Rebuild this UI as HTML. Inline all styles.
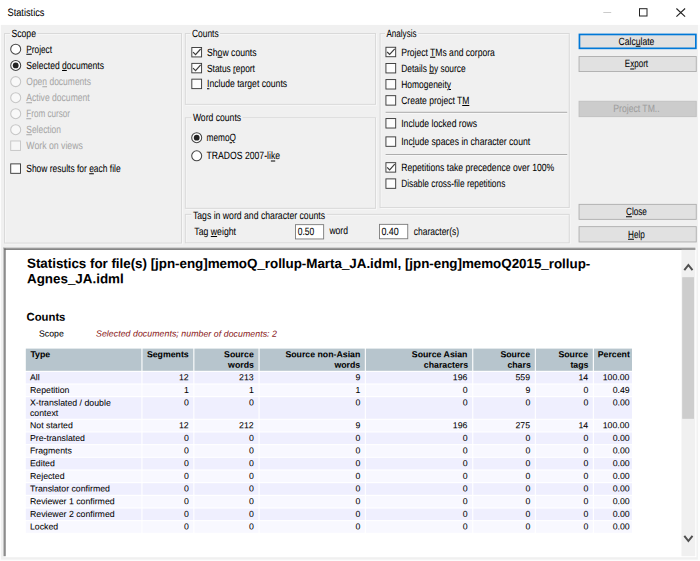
<!DOCTYPE html>
<html lang="en"><head><meta charset="utf-8"><title>Statistics</title>
<style>
html,body{margin:0;padding:0}
body{width:700px;height:561px;position:relative;overflow:hidden;background:#f0f0f0;font-family:"Liberation Sans",sans-serif}
#g{position:absolute;left:0;top:0;display:block}
.t{position:absolute;white-space:nowrap;line-height:14px;height:14px;transform-origin:0 50%;-webkit-text-stroke:0.05px currentColor}
.t u{text-decoration:underline;text-decoration-thickness:0.75px;text-underline-offset:0.75px}
.r{position:absolute;white-space:nowrap;-webkit-text-stroke:0.05px currentColor}
</style></head>
<body>
<svg id="g" width="700" height="561" viewBox="0 0 700 561">
<rect x="0.00" y="0.00" width="700.00" height="561.00" fill="#fcfcfc"/>
<rect x="1.00" y="0.00" width="696.90" height="559.60" fill="#f0f0f0"/>
<rect x="0.00" y="0.00" width="700.00" height="24.90" fill="#fff"/>
<rect x="603.30" y="12.10" width="7.90" height="0.90" fill="#c6c6c6"/>
<rect x="639.50" y="8.70" width="7.50" height="7.30" fill="none" stroke="#222" stroke-width="1.00"/>
<path d="M676.4 8.5 L685.1 16.6 M685.1 8.5 L676.4 16.6" stroke="#222" stroke-width="1.1" fill="none"/>
<rect x="5.35" y="34.25" width="177.10" height="209.70" fill="none" stroke="#f9f9f9" stroke-width="0.80"/>
<rect x="4.57" y="33.48" width="176.95" height="209.55" fill="none" stroke="#d8d8d8" stroke-width="0.95"/>
<rect x="9.90" y="32.00" width="27.60" height="3.50" fill="#f0f0f0"/>
<circle cx="15.70" cy="49.20" r="5.00" fill="#fff" stroke="#444" stroke-width="1.05"/>
<circle cx="15.70" cy="65.40" r="5.00" fill="#fff" stroke="#444" stroke-width="1.05"/>
<circle cx="15.70" cy="65.40" r="2.9" fill="#222"/>
<circle cx="15.70" cy="81.60" r="5.00" fill="#f8f8f8" stroke="#c6c6c6" stroke-width="1.05"/>
<circle cx="15.70" cy="97.70" r="5.00" fill="#f8f8f8" stroke="#c6c6c6" stroke-width="1.05"/>
<circle cx="15.70" cy="113.70" r="5.00" fill="#f8f8f8" stroke="#c6c6c6" stroke-width="1.05"/>
<circle cx="15.70" cy="129.70" r="5.00" fill="#f8f8f8" stroke="#c6c6c6" stroke-width="1.05"/>
<rect x="10.72" y="140.97" width="9.75" height="9.45" fill="#f6f6f6" stroke="#c6c6c6" stroke-width="0.95"/>
<rect x="10.72" y="163.88" width="9.75" height="9.45" fill="#fdfdfd" stroke="#3c3c3c" stroke-width="0.95"/>
<rect x="186.05" y="34.25" width="190.40" height="71.00" fill="none" stroke="#f9f9f9" stroke-width="0.80"/>
<rect x="185.28" y="33.48" width="190.25" height="70.85" fill="none" stroke="#d8d8d8" stroke-width="0.95"/>
<rect x="190.50" y="32.00" width="29.60" height="3.50" fill="#f0f0f0"/>
<rect x="191.82" y="47.48" width="9.75" height="9.45" fill="#fdfdfd" stroke="#3c3c3c" stroke-width="0.95"/>
<path d="M193.05 52.20 L195.55 54.70 L200.65 49.00" fill="none" stroke="#3a3a3a" stroke-width="1.15"/>
<rect x="191.82" y="63.38" width="9.75" height="9.45" fill="#fdfdfd" stroke="#3c3c3c" stroke-width="0.95"/>
<path d="M193.05 68.10 L195.55 70.60 L200.65 64.90" fill="none" stroke="#3a3a3a" stroke-width="1.15"/>
<rect x="191.82" y="79.17" width="9.75" height="9.45" fill="#fdfdfd" stroke="#3c3c3c" stroke-width="0.95"/>
<rect x="186.05" y="118.55" width="190.40" height="90.70" fill="none" stroke="#f9f9f9" stroke-width="0.80"/>
<rect x="185.28" y="117.77" width="190.25" height="90.55" fill="none" stroke="#d8d8d8" stroke-width="0.95"/>
<rect x="191.40" y="116.30" width="51.20" height="3.50" fill="#f0f0f0"/>
<circle cx="196.70" cy="137.70" r="5.00" fill="#fff" stroke="#444" stroke-width="1.05"/>
<circle cx="196.70" cy="137.70" r="2.9" fill="#222"/>
<circle cx="196.70" cy="155.80" r="5.00" fill="#fff" stroke="#444" stroke-width="1.05"/>
<rect x="380.85" y="34.25" width="189.30" height="174.20" fill="none" stroke="#f9f9f9" stroke-width="0.80"/>
<rect x="380.08" y="33.48" width="189.15" height="174.05" fill="none" stroke="#d8d8d8" stroke-width="0.95"/>
<rect x="385.00" y="32.00" width="33.00" height="3.50" fill="#f0f0f0"/>
<rect x="385.93" y="47.27" width="9.75" height="9.45" fill="#fdfdfd" stroke="#3c3c3c" stroke-width="0.95"/>
<path d="M387.15 52.00 L389.65 54.50 L394.75 48.80" fill="none" stroke="#3a3a3a" stroke-width="1.15"/>
<rect x="385.93" y="63.48" width="9.75" height="9.45" fill="#fdfdfd" stroke="#3c3c3c" stroke-width="0.95"/>
<rect x="385.93" y="79.57" width="9.75" height="9.45" fill="#fdfdfd" stroke="#3c3c3c" stroke-width="0.95"/>
<rect x="385.93" y="95.67" width="9.75" height="9.45" fill="#fdfdfd" stroke="#3c3c3c" stroke-width="0.95"/>
<rect x="385.93" y="118.57" width="9.75" height="9.45" fill="#fdfdfd" stroke="#3c3c3c" stroke-width="0.95"/>
<rect x="385.93" y="136.88" width="9.75" height="9.45" fill="#fdfdfd" stroke="#3c3c3c" stroke-width="0.95"/>
<rect x="385.93" y="162.68" width="9.75" height="9.45" fill="#fdfdfd" stroke="#3c3c3c" stroke-width="0.95"/>
<path d="M387.15 167.40 L389.65 169.90 L394.75 164.20" fill="none" stroke="#3a3a3a" stroke-width="1.15"/>
<rect x="385.93" y="178.88" width="9.75" height="9.45" fill="#fdfdfd" stroke="#3c3c3c" stroke-width="0.95"/>
<rect x="385.60" y="112.70" width="181.60" height="0.90" fill="#fcfcfc"/>
<rect x="385.60" y="111.80" width="181.60" height="0.95" fill="#a6a6a6"/>
<rect x="385.60" y="155.00" width="181.60" height="0.90" fill="#fcfcfc"/>
<rect x="385.60" y="154.10" width="181.60" height="0.95" fill="#a6a6a6"/>
<rect x="186.05" y="215.15" width="384.10" height="28.60" fill="none" stroke="#f9f9f9" stroke-width="0.80"/>
<rect x="185.28" y="214.38" width="383.95" height="28.45" fill="none" stroke="#d8d8d8" stroke-width="0.95"/>
<rect x="191.40" y="212.90" width="135.20" height="3.50" fill="#f0f0f0"/>
<rect x="295.45" y="224.65" width="28.20" height="14.30" fill="#fff" stroke="#7a7a7a" stroke-width="0.90"/>
<rect x="379.55" y="224.35" width="28.20" height="14.40" fill="#fff" stroke="#7a7a7a" stroke-width="0.90"/>
<rect x="579.45" y="34.45" width="116.40" height="13.90" fill="#e1e1e1" stroke="#0078d7" stroke-width="1.70"/>
<rect x="579.05" y="56.55" width="117.20" height="15.00" fill="#e1e1e1" stroke="#adadad" stroke-width="0.90"/>
<rect x="579.05" y="101.25" width="117.20" height="15.40" fill="#cccccc" stroke="#bfbfbf" stroke-width="0.90"/>
<rect x="579.05" y="204.35" width="117.20" height="15.00" fill="#e1e1e1" stroke="#adadad" stroke-width="0.90"/>
<rect x="579.05" y="226.65" width="117.20" height="15.30" fill="#e1e1e1" stroke="#adadad" stroke-width="0.90"/>
<rect x="3.40" y="247.60" width="693.00" height="309.60" fill="#fff"/>
<rect x="3.40" y="247.60" width="692.00" height="0.90" fill="#a0a0a0"/>
<rect x="3.40" y="247.60" width="0.90" height="308.60" fill="#a0a0a0"/>
<rect x="4.30" y="248.50" width="691.10" height="1.30" fill="#696969"/>
<rect x="4.30" y="248.50" width="1.30" height="307.70" fill="#696969"/>
<rect x="681.50" y="249.80" width="13.80" height="306.40" fill="#f0f0f0"/>
<path d="M684.3 270.2 L688.4 265.0 L692.5 270.2" fill="none" stroke="#505050" stroke-width="2"/>
<rect x="682.20" y="277.20" width="11.80" height="141.60" fill="#cdcdcd"/>
<path d="M684.3 535.8 L688.4 541.0 L692.5 535.8" fill="none" stroke="#505050" stroke-width="2"/>
<rect x="25.80" y="348.60" width="115.60" height="22.20" fill="#b7c5cd"/>
<rect x="142.50" y="348.60" width="50.80" height="22.20" fill="#b7c5cd"/>
<rect x="194.40" y="348.60" width="64.10" height="22.20" fill="#b7c5cd"/>
<rect x="259.60" y="348.60" width="105.20" height="22.20" fill="#b7c5cd"/>
<rect x="365.90" y="348.60" width="106.30" height="22.20" fill="#b7c5cd"/>
<rect x="473.30" y="348.60" width="61.50" height="22.20" fill="#b7c5cd"/>
<rect x="535.90" y="348.60" width="56.90" height="22.20" fill="#b7c5cd"/>
<rect x="593.90" y="348.60" width="38.10" height="22.20" fill="#b7c5cd"/>
<rect x="25.80" y="371.90" width="115.60" height="11.55" fill="#efeffe"/>
<rect x="142.50" y="371.90" width="50.80" height="11.55" fill="#efeffe"/>
<rect x="194.40" y="371.90" width="64.10" height="11.55" fill="#efeffe"/>
<rect x="259.60" y="371.90" width="105.20" height="11.55" fill="#efeffe"/>
<rect x="365.90" y="371.90" width="106.30" height="11.55" fill="#efeffe"/>
<rect x="473.30" y="371.90" width="61.50" height="11.55" fill="#efeffe"/>
<rect x="535.90" y="371.90" width="56.90" height="11.55" fill="#efeffe"/>
<rect x="593.90" y="371.90" width="38.10" height="11.55" fill="#efeffe"/>
<rect x="25.80" y="384.57" width="115.60" height="11.55" fill="#f8f8ff"/>
<rect x="142.50" y="384.57" width="50.80" height="11.55" fill="#f8f8ff"/>
<rect x="194.40" y="384.57" width="64.10" height="11.55" fill="#f8f8ff"/>
<rect x="259.60" y="384.57" width="105.20" height="11.55" fill="#f8f8ff"/>
<rect x="365.90" y="384.57" width="106.30" height="11.55" fill="#f8f8ff"/>
<rect x="473.30" y="384.57" width="61.50" height="11.55" fill="#f8f8ff"/>
<rect x="535.90" y="384.57" width="56.90" height="11.55" fill="#f8f8ff"/>
<rect x="593.90" y="384.57" width="38.10" height="11.55" fill="#f8f8ff"/>
<rect x="25.80" y="397.24" width="115.60" height="21.50" fill="#efeffe"/>
<rect x="142.50" y="397.24" width="50.80" height="21.50" fill="#efeffe"/>
<rect x="194.40" y="397.24" width="64.10" height="21.50" fill="#efeffe"/>
<rect x="259.60" y="397.24" width="105.20" height="21.50" fill="#efeffe"/>
<rect x="365.90" y="397.24" width="106.30" height="21.50" fill="#efeffe"/>
<rect x="473.30" y="397.24" width="61.50" height="21.50" fill="#efeffe"/>
<rect x="535.90" y="397.24" width="56.90" height="21.50" fill="#efeffe"/>
<rect x="593.90" y="397.24" width="38.10" height="21.50" fill="#efeffe"/>
<rect x="25.80" y="419.86" width="115.60" height="11.55" fill="#f8f8ff"/>
<rect x="142.50" y="419.86" width="50.80" height="11.55" fill="#f8f8ff"/>
<rect x="194.40" y="419.86" width="64.10" height="11.55" fill="#f8f8ff"/>
<rect x="259.60" y="419.86" width="105.20" height="11.55" fill="#f8f8ff"/>
<rect x="365.90" y="419.86" width="106.30" height="11.55" fill="#f8f8ff"/>
<rect x="473.30" y="419.86" width="61.50" height="11.55" fill="#f8f8ff"/>
<rect x="535.90" y="419.86" width="56.90" height="11.55" fill="#f8f8ff"/>
<rect x="593.90" y="419.86" width="38.10" height="11.55" fill="#f8f8ff"/>
<rect x="25.80" y="432.53" width="115.60" height="11.55" fill="#efeffe"/>
<rect x="142.50" y="432.53" width="50.80" height="11.55" fill="#efeffe"/>
<rect x="194.40" y="432.53" width="64.10" height="11.55" fill="#efeffe"/>
<rect x="259.60" y="432.53" width="105.20" height="11.55" fill="#efeffe"/>
<rect x="365.90" y="432.53" width="106.30" height="11.55" fill="#efeffe"/>
<rect x="473.30" y="432.53" width="61.50" height="11.55" fill="#efeffe"/>
<rect x="535.90" y="432.53" width="56.90" height="11.55" fill="#efeffe"/>
<rect x="593.90" y="432.53" width="38.10" height="11.55" fill="#efeffe"/>
<rect x="25.80" y="445.20" width="115.60" height="11.55" fill="#f8f8ff"/>
<rect x="142.50" y="445.20" width="50.80" height="11.55" fill="#f8f8ff"/>
<rect x="194.40" y="445.20" width="64.10" height="11.55" fill="#f8f8ff"/>
<rect x="259.60" y="445.20" width="105.20" height="11.55" fill="#f8f8ff"/>
<rect x="365.90" y="445.20" width="106.30" height="11.55" fill="#f8f8ff"/>
<rect x="473.30" y="445.20" width="61.50" height="11.55" fill="#f8f8ff"/>
<rect x="535.90" y="445.20" width="56.90" height="11.55" fill="#f8f8ff"/>
<rect x="593.90" y="445.20" width="38.10" height="11.55" fill="#f8f8ff"/>
<rect x="25.80" y="457.87" width="115.60" height="11.55" fill="#efeffe"/>
<rect x="142.50" y="457.87" width="50.80" height="11.55" fill="#efeffe"/>
<rect x="194.40" y="457.87" width="64.10" height="11.55" fill="#efeffe"/>
<rect x="259.60" y="457.87" width="105.20" height="11.55" fill="#efeffe"/>
<rect x="365.90" y="457.87" width="106.30" height="11.55" fill="#efeffe"/>
<rect x="473.30" y="457.87" width="61.50" height="11.55" fill="#efeffe"/>
<rect x="535.90" y="457.87" width="56.90" height="11.55" fill="#efeffe"/>
<rect x="593.90" y="457.87" width="38.10" height="11.55" fill="#efeffe"/>
<rect x="25.80" y="470.54" width="115.60" height="11.55" fill="#f8f8ff"/>
<rect x="142.50" y="470.54" width="50.80" height="11.55" fill="#f8f8ff"/>
<rect x="194.40" y="470.54" width="64.10" height="11.55" fill="#f8f8ff"/>
<rect x="259.60" y="470.54" width="105.20" height="11.55" fill="#f8f8ff"/>
<rect x="365.90" y="470.54" width="106.30" height="11.55" fill="#f8f8ff"/>
<rect x="473.30" y="470.54" width="61.50" height="11.55" fill="#f8f8ff"/>
<rect x="535.90" y="470.54" width="56.90" height="11.55" fill="#f8f8ff"/>
<rect x="593.90" y="470.54" width="38.10" height="11.55" fill="#f8f8ff"/>
<rect x="25.80" y="483.21" width="115.60" height="11.55" fill="#efeffe"/>
<rect x="142.50" y="483.21" width="50.80" height="11.55" fill="#efeffe"/>
<rect x="194.40" y="483.21" width="64.10" height="11.55" fill="#efeffe"/>
<rect x="259.60" y="483.21" width="105.20" height="11.55" fill="#efeffe"/>
<rect x="365.90" y="483.21" width="106.30" height="11.55" fill="#efeffe"/>
<rect x="473.30" y="483.21" width="61.50" height="11.55" fill="#efeffe"/>
<rect x="535.90" y="483.21" width="56.90" height="11.55" fill="#efeffe"/>
<rect x="593.90" y="483.21" width="38.10" height="11.55" fill="#efeffe"/>
<rect x="25.80" y="495.88" width="115.60" height="11.55" fill="#f8f8ff"/>
<rect x="142.50" y="495.88" width="50.80" height="11.55" fill="#f8f8ff"/>
<rect x="194.40" y="495.88" width="64.10" height="11.55" fill="#f8f8ff"/>
<rect x="259.60" y="495.88" width="105.20" height="11.55" fill="#f8f8ff"/>
<rect x="365.90" y="495.88" width="106.30" height="11.55" fill="#f8f8ff"/>
<rect x="473.30" y="495.88" width="61.50" height="11.55" fill="#f8f8ff"/>
<rect x="535.90" y="495.88" width="56.90" height="11.55" fill="#f8f8ff"/>
<rect x="593.90" y="495.88" width="38.10" height="11.55" fill="#f8f8ff"/>
<rect x="25.80" y="508.55" width="115.60" height="11.55" fill="#efeffe"/>
<rect x="142.50" y="508.55" width="50.80" height="11.55" fill="#efeffe"/>
<rect x="194.40" y="508.55" width="64.10" height="11.55" fill="#efeffe"/>
<rect x="259.60" y="508.55" width="105.20" height="11.55" fill="#efeffe"/>
<rect x="365.90" y="508.55" width="106.30" height="11.55" fill="#efeffe"/>
<rect x="473.30" y="508.55" width="61.50" height="11.55" fill="#efeffe"/>
<rect x="535.90" y="508.55" width="56.90" height="11.55" fill="#efeffe"/>
<rect x="593.90" y="508.55" width="38.10" height="11.55" fill="#efeffe"/>
<rect x="25.80" y="521.22" width="115.60" height="11.55" fill="#f8f8ff"/>
<rect x="142.50" y="521.22" width="50.80" height="11.55" fill="#f8f8ff"/>
<rect x="194.40" y="521.22" width="64.10" height="11.55" fill="#f8f8ff"/>
<rect x="259.60" y="521.22" width="105.20" height="11.55" fill="#f8f8ff"/>
<rect x="365.90" y="521.22" width="106.30" height="11.55" fill="#f8f8ff"/>
<rect x="473.30" y="521.22" width="61.50" height="11.55" fill="#f8f8ff"/>
<rect x="535.90" y="521.22" width="56.90" height="11.55" fill="#f8f8ff"/>
<rect x="593.90" y="521.22" width="38.10" height="11.55" fill="#f8f8ff"/>
</svg>
<span class="t" style="left:7px;top:5px;font-size:10.60px;color:#000;transform:translate(0.50px,0.45px) rotate(0.03deg) scaleX(0.8724);">Statistics</span>
<span class="t" style="left:11px;top:26px;font-size:10.50px;color:#000;transform:translate(0.40px,0.05px) rotate(0.03deg) scaleX(0.8262);">Scope</span>
<span class="t" style="left:26px;top:41px;font-size:10.50px;color:#000;transform:translate(0.30px,0.85px) rotate(0.03deg) scaleX(0.7864);"><u>P</u>roject</span>
<span class="t" style="left:26px;top:58px;font-size:10.50px;color:#000;transform:translate(0.30px,0.05px) rotate(0.03deg) scaleX(0.8167);">Selected <u>d</u>ocuments</span>
<span class="t" style="left:26px;top:74px;font-size:10.50px;color:#a6a6a6;transform:translate(0.30px,0.25px) rotate(0.03deg) scaleX(0.8078);">Ope<u>n</u> documents</span>
<span class="t" style="left:26px;top:90px;font-size:10.50px;color:#a6a6a6;transform:translate(0.30px,0.35px) rotate(0.03deg) scaleX(0.8168);"><u>A</u>ctive document</span>
<span class="t" style="left:26px;top:106px;font-size:10.50px;color:#a6a6a6;transform:translate(0.30px,0.35px) rotate(0.03deg) scaleX(0.7722);"><u>F</u>rom cursor</span>
<span class="t" style="left:26px;top:122px;font-size:10.50px;color:#a6a6a6;transform:translate(0.30px,0.35px) rotate(0.03deg) scaleX(0.8010);"><u>S</u>election</span>
<span class="t" style="left:26px;top:138px;font-size:10.50px;color:#a6a6a6;transform:translate(0.30px,0.35px) rotate(0.03deg) scaleX(0.8314);">Work on views</span>
<span class="t" style="left:26px;top:161px;font-size:10.50px;color:#000;transform:translate(0.30px,0.25px) rotate(0.03deg) scaleX(0.8039);">Show results for <u>e</u>ach file</span>
<span class="t" style="left:192px;top:26px;font-size:10.50px;color:#000;transform:translate(0.00px,0.05px) rotate(0.03deg) scaleX(0.7995);">Counts</span>
<span class="t" style="left:207px;top:44px;font-size:10.50px;color:#000;transform:translate(0.00px,0.65px) rotate(0.03deg) scaleX(0.8250);">Sh<u>o</u>w counts</span>
<span class="t" style="left:207px;top:60px;font-size:10.50px;color:#000;transform:translate(0.00px,0.55px) rotate(0.03deg) scaleX(0.7968);">Status <u>r</u>eport</span>
<span class="t" style="left:207px;top:76px;font-size:10.50px;color:#000;transform:translate(0.00px,0.35px) rotate(0.03deg) scaleX(0.8217);"><u>I</u>nclude target counts</span>
<span class="t" style="left:192px;top:110px;font-size:10.50px;color:#000;transform:translate(0.90px,0.35px) rotate(0.03deg) scaleX(0.8204);">Word counts</span>
<span class="t" style="left:206px;top:130px;font-size:10.50px;color:#000;transform:translate(0.60px,0.35px) rotate(0.03deg) scaleX(0.7873);">memo<u>Q</u></span>
<span class="t" style="left:206px;top:148px;font-size:10.50px;color:#000;transform:translate(0.60px,0.45px) rotate(0.03deg) scaleX(0.8221);">TRADOS 2007-li<u>k</u>e</span>
<span class="t" style="left:386px;top:26px;font-size:10.50px;color:#000;transform:translate(0.50px,0.05px) rotate(0.03deg) scaleX(0.7673);">Analysis</span>
<span class="t" style="left:401px;top:44px;font-size:10.50px;color:#000;transform:translate(0.20px,0.65px) rotate(0.03deg) scaleX(0.8155);">Project <u>T</u>Ms and corpora</span>
<span class="t" style="left:401px;top:60px;font-size:10.50px;color:#000;transform:translate(0.20px,0.85px) rotate(0.03deg) scaleX(0.8009);">Details <u>b</u>y source</span>
<span class="t" style="left:401px;top:76px;font-size:10.50px;color:#000;transform:translate(0.20px,0.95px) rotate(0.03deg) scaleX(0.8049);">Homogeneit<u>y</u></span>
<span class="t" style="left:401px;top:93px;font-size:10.50px;color:#000;transform:translate(0.20px,0.05px) rotate(0.03deg) scaleX(0.8123);">Create project T<u>M</u></span>
<span class="t" style="left:401px;top:115px;font-size:10.50px;color:#000;transform:translate(0.20px,0.95px) rotate(0.03deg) scaleX(0.8231);">Include locked rows</span>
<span class="t" style="left:401px;top:134px;font-size:10.50px;color:#000;transform:translate(0.20px,0.25px) rotate(0.03deg) scaleX(0.8247);">Inc<u>l</u>ude spaces in character count</span>
<span class="t" style="left:401px;top:160px;font-size:10.50px;color:#000;transform:translate(0.20px,0.05px) rotate(0.03deg) scaleX(0.8217);">Repetitions take precedence over 100%</span>
<span class="t" style="left:401px;top:176px;font-size:10.50px;color:#000;transform:translate(0.20px,0.25px) rotate(0.03deg) scaleX(0.7928);">Disable cross-file repetitions</span>
<span class="t" style="left:192px;top:207px;font-size:10.50px;color:#000;transform:translate(0.90px,0.75px) rotate(0.03deg) scaleX(0.8266);">Tags in word and character counts</span>
<span class="t" style="left:194px;top:224px;font-size:10.50px;color:#000;transform:translate(0.30px,0.05px) rotate(0.03deg) scaleX(0.8307);">Tag <u>w</u>eight</span>
<span class="t" style="left:297px;top:224px;font-size:10.50px;color:#000;transform:translate(0.70px,0.45px) rotate(0.03deg) scaleX(0.8123);">0.50</span>
<span class="t" style="left:329px;top:222px;font-size:10.50px;color:#000;transform:translate(0.40px,0.95px) rotate(0.03deg) scaleX(0.8172);">word</span>
<span class="t" style="left:381px;top:224px;font-size:10.50px;color:#000;transform:translate(0.40px,0.25px) rotate(0.03deg) scaleX(0.8514);">0.40</span>
<span class="t" style="left:413px;top:223px;font-size:10.50px;color:#000;transform:translate(0.80px,0.85px) rotate(0.03deg) scaleX(0.8087);">character(s)</span>
<span class="t" style="left:618px;top:33px;font-size:10.50px;color:#000;transform:translate(0.60px,0.75px) rotate(0.03deg) scaleX(0.8155);">Calc<u>u</u>late</span>
<span class="t" style="left:624px;top:56px;font-size:10.50px;color:#000;transform:translate(0.85px,0.40px) rotate(0.03deg) scaleX(0.7645);">E<u>x</u>port</span>
<span class="t" style="left:613px;top:101px;font-size:10.50px;color:#9d9d9d;transform:translate(0.30px,0.30px) rotate(0.03deg) scaleX(0.8209);">Project TM..</span>
<span class="t" style="left:626px;top:204px;font-size:10.50px;color:#000;transform:translate(0.00px,0.20px) rotate(0.03deg) scaleX(0.7785);"><u>C</u>lose</span>
<span class="t" style="left:628px;top:226px;font-size:10.50px;color:#000;transform:translate(0.05px,0.65px) rotate(0.03deg) scaleX(0.7779);"><u>H</u>elp</span>
<span class="r" style="left:27px;top:252px;font-size:13.40px;line-height:21px;font-weight:bold;font-style:normal;color:#000;letter-spacing:-0.026px;transform-origin:0 50%;transform:translate(0.00px,0.86px) rotate(0.03deg);">Statistics for file(s) [jpn-eng]memoQ_rollup-Marta_JA.idml, [jpn-eng]memoQ2015_rollup-</span>
<span class="r" style="left:27px;top:268px;font-size:13.40px;line-height:21px;font-weight:bold;font-style:normal;color:#000;transform-origin:0 50%;transform:translate(0.00px,0.26px) rotate(0.03deg);">Agnes_JA.idml</span>
<span class="r" style="left:26px;top:307px;font-size:11.30px;line-height:18px;font-weight:bold;font-style:normal;color:#000;letter-spacing:-0.020px;transform-origin:0 50%;transform:translate(0.60px,0.68px) rotate(0.03deg);">Counts</span>
<span class="r" style="left:39px;top:326px;font-size:8.75px;line-height:14px;font-weight:normal;font-style:normal;color:#000;transform-origin:0 50%;transform:translate(0.00px,0.57px) rotate(0.03deg);">Scope</span>
<span class="r" style="left:96px;top:326px;font-size:8.75px;line-height:14px;font-weight:normal;font-style:italic;color:#8b1a1a;letter-spacing:0.059px;transform-origin:0 50%;transform:translate(0.00px,0.57px) rotate(0.03deg);">Selected documents; number of documents: 2</span>
<span class="r" style="left:30px;top:347px;font-size:8.75px;line-height:14px;font-weight:bold;font-style:normal;color:#000;transform-origin:0 50%;transform:translate(0.40px,0.17px) rotate(0.03deg);">Type</span>
<span class="r" style="right:511px;top:347px;font-size:8.75px;line-height:14px;font-weight:bold;font-style:normal;color:#000;transform-origin:100% 50%;transform:translate(-0.10px,0.17px) rotate(0.03deg);">Segments</span>
<span class="r" style="right:445px;top:347px;font-size:8.75px;line-height:14px;font-weight:bold;font-style:normal;color:#000;transform-origin:100% 50%;transform:translate(-0.90px,0.17px) rotate(0.03deg);">Source</span>
<span class="r" style="right:445px;top:357px;font-size:8.75px;line-height:14px;font-weight:bold;font-style:normal;color:#000;transform-origin:100% 50%;transform:translate(-0.90px,0.77px) rotate(0.03deg);">words</span>
<span class="r" style="right:339px;top:347px;font-size:8.75px;line-height:14px;font-weight:bold;font-style:normal;color:#000;transform-origin:100% 50%;transform:translate(-0.60px,0.17px) rotate(0.03deg);">Source non-Asian</span>
<span class="r" style="right:339px;top:357px;font-size:8.75px;line-height:14px;font-weight:bold;font-style:normal;color:#000;transform-origin:100% 50%;transform:translate(-0.60px,0.77px) rotate(0.03deg);">words</span>
<span class="r" style="right:232px;top:347px;font-size:8.75px;line-height:14px;font-weight:bold;font-style:normal;color:#000;transform-origin:100% 50%;transform:translate(-0.20px,0.17px) rotate(0.03deg);">Source Asian</span>
<span class="r" style="right:232px;top:357px;font-size:8.75px;line-height:14px;font-weight:bold;font-style:normal;color:#000;transform-origin:100% 50%;transform:translate(-0.20px,0.77px) rotate(0.03deg);">characters</span>
<span class="r" style="right:169px;top:347px;font-size:8.75px;line-height:14px;font-weight:bold;font-style:normal;color:#000;transform-origin:100% 50%;transform:translate(-0.60px,0.17px) rotate(0.03deg);">Source</span>
<span class="r" style="right:169px;top:357px;font-size:8.75px;line-height:14px;font-weight:bold;font-style:normal;color:#000;transform-origin:100% 50%;transform:translate(-0.60px,0.77px) rotate(0.03deg);">chars</span>
<span class="r" style="right:111px;top:347px;font-size:8.75px;line-height:14px;font-weight:bold;font-style:normal;color:#000;transform-origin:100% 50%;transform:translate(-0.60px,0.17px) rotate(0.03deg);">Source</span>
<span class="r" style="right:111px;top:357px;font-size:8.75px;line-height:14px;font-weight:bold;font-style:normal;color:#000;transform-origin:100% 50%;transform:translate(-0.60px,0.77px) rotate(0.03deg);">tags</span>
<span class="r" style="right:70px;top:347px;font-size:8.75px;line-height:14px;font-weight:bold;font-style:normal;color:#000;transform-origin:100% 50%;transform:translate(-0.30px,0.17px) rotate(0.03deg);">Percent</span>
<span class="r" style="left:30px;top:370px;font-size:8.75px;line-height:14px;font-weight:normal;font-style:normal;color:#000;transform-origin:0 50%;transform:translate(0.00px,0.27px) rotate(0.03deg);">All</span>
<span class="r" style="right:511px;top:370px;font-size:8.75px;line-height:14px;font-weight:normal;font-style:normal;color:#000;transform-origin:100% 50%;transform:translate(-0.10px,0.27px) rotate(0.03deg);">12</span>
<span class="r" style="right:445px;top:370px;font-size:8.75px;line-height:14px;font-weight:normal;font-style:normal;color:#000;transform-origin:100% 50%;transform:translate(-0.90px,0.27px) rotate(0.03deg);">213</span>
<span class="r" style="right:339px;top:370px;font-size:8.75px;line-height:14px;font-weight:normal;font-style:normal;color:#000;transform-origin:100% 50%;transform:translate(-0.60px,0.27px) rotate(0.03deg);">9</span>
<span class="r" style="right:232px;top:370px;font-size:8.75px;line-height:14px;font-weight:normal;font-style:normal;color:#000;transform-origin:100% 50%;transform:translate(-0.20px,0.27px) rotate(0.03deg);">196</span>
<span class="r" style="right:169px;top:370px;font-size:8.75px;line-height:14px;font-weight:normal;font-style:normal;color:#000;transform-origin:100% 50%;transform:translate(-0.60px,0.27px) rotate(0.03deg);">559</span>
<span class="r" style="right:111px;top:370px;font-size:8.75px;line-height:14px;font-weight:normal;font-style:normal;color:#000;transform-origin:100% 50%;transform:translate(-0.60px,0.27px) rotate(0.03deg);">14</span>
<span class="r" style="right:70px;top:370px;font-size:8.75px;line-height:14px;font-weight:normal;font-style:normal;color:#000;transform-origin:100% 50%;transform:translate(-0.30px,0.27px) rotate(0.03deg);">100.00</span>
<span class="r" style="left:30px;top:382px;font-size:8.75px;line-height:14px;font-weight:normal;font-style:normal;color:#000;transform-origin:0 50%;transform:translate(0.00px,0.94px) rotate(0.03deg);">Repetition</span>
<span class="r" style="right:511px;top:382px;font-size:8.75px;line-height:14px;font-weight:normal;font-style:normal;color:#000;transform-origin:100% 50%;transform:translate(-0.10px,0.94px) rotate(0.03deg);">1</span>
<span class="r" style="right:445px;top:382px;font-size:8.75px;line-height:14px;font-weight:normal;font-style:normal;color:#000;transform-origin:100% 50%;transform:translate(-0.90px,0.94px) rotate(0.03deg);">1</span>
<span class="r" style="right:339px;top:382px;font-size:8.75px;line-height:14px;font-weight:normal;font-style:normal;color:#000;transform-origin:100% 50%;transform:translate(-0.60px,0.94px) rotate(0.03deg);">1</span>
<span class="r" style="right:232px;top:382px;font-size:8.75px;line-height:14px;font-weight:normal;font-style:normal;color:#000;transform-origin:100% 50%;transform:translate(-0.20px,0.94px) rotate(0.03deg);">0</span>
<span class="r" style="right:169px;top:382px;font-size:8.75px;line-height:14px;font-weight:normal;font-style:normal;color:#000;transform-origin:100% 50%;transform:translate(-0.60px,0.94px) rotate(0.03deg);">9</span>
<span class="r" style="right:111px;top:382px;font-size:8.75px;line-height:14px;font-weight:normal;font-style:normal;color:#000;transform-origin:100% 50%;transform:translate(-0.60px,0.94px) rotate(0.03deg);">0</span>
<span class="r" style="right:70px;top:382px;font-size:8.75px;line-height:14px;font-weight:normal;font-style:normal;color:#000;transform-origin:100% 50%;transform:translate(-0.30px,0.94px) rotate(0.03deg);">0.49</span>
<span class="r" style="left:30px;top:395px;font-size:8.75px;line-height:14px;font-weight:normal;font-style:normal;color:#000;transform-origin:0 50%;transform:translate(0.00px,0.61px) rotate(0.03deg);">X-translated / double</span>
<span class="r" style="left:30px;top:405px;font-size:8.75px;line-height:14px;font-weight:normal;font-style:normal;color:#000;transform-origin:0 50%;transform:translate(0.00px,0.91px) rotate(0.03deg);">context</span>
<span class="r" style="right:511px;top:395px;font-size:8.75px;line-height:14px;font-weight:normal;font-style:normal;color:#000;transform-origin:100% 50%;transform:translate(-0.10px,0.61px) rotate(0.03deg);">0</span>
<span class="r" style="right:445px;top:395px;font-size:8.75px;line-height:14px;font-weight:normal;font-style:normal;color:#000;transform-origin:100% 50%;transform:translate(-0.90px,0.61px) rotate(0.03deg);">0</span>
<span class="r" style="right:339px;top:395px;font-size:8.75px;line-height:14px;font-weight:normal;font-style:normal;color:#000;transform-origin:100% 50%;transform:translate(-0.60px,0.61px) rotate(0.03deg);">0</span>
<span class="r" style="right:232px;top:395px;font-size:8.75px;line-height:14px;font-weight:normal;font-style:normal;color:#000;transform-origin:100% 50%;transform:translate(-0.20px,0.61px) rotate(0.03deg);">0</span>
<span class="r" style="right:169px;top:395px;font-size:8.75px;line-height:14px;font-weight:normal;font-style:normal;color:#000;transform-origin:100% 50%;transform:translate(-0.60px,0.61px) rotate(0.03deg);">0</span>
<span class="r" style="right:111px;top:395px;font-size:8.75px;line-height:14px;font-weight:normal;font-style:normal;color:#000;transform-origin:100% 50%;transform:translate(-0.60px,0.61px) rotate(0.03deg);">0</span>
<span class="r" style="right:70px;top:395px;font-size:8.75px;line-height:14px;font-weight:normal;font-style:normal;color:#000;transform-origin:100% 50%;transform:translate(-0.30px,0.61px) rotate(0.03deg);">0.00</span>
<span class="r" style="left:30px;top:418px;font-size:8.75px;line-height:14px;font-weight:normal;font-style:normal;color:#000;transform-origin:0 50%;transform:translate(0.00px,0.23px) rotate(0.03deg);">Not started</span>
<span class="r" style="right:511px;top:418px;font-size:8.75px;line-height:14px;font-weight:normal;font-style:normal;color:#000;transform-origin:100% 50%;transform:translate(-0.10px,0.23px) rotate(0.03deg);">12</span>
<span class="r" style="right:445px;top:418px;font-size:8.75px;line-height:14px;font-weight:normal;font-style:normal;color:#000;transform-origin:100% 50%;transform:translate(-0.90px,0.23px) rotate(0.03deg);">212</span>
<span class="r" style="right:339px;top:418px;font-size:8.75px;line-height:14px;font-weight:normal;font-style:normal;color:#000;transform-origin:100% 50%;transform:translate(-0.60px,0.23px) rotate(0.03deg);">9</span>
<span class="r" style="right:232px;top:418px;font-size:8.75px;line-height:14px;font-weight:normal;font-style:normal;color:#000;transform-origin:100% 50%;transform:translate(-0.20px,0.23px) rotate(0.03deg);">196</span>
<span class="r" style="right:169px;top:418px;font-size:8.75px;line-height:14px;font-weight:normal;font-style:normal;color:#000;transform-origin:100% 50%;transform:translate(-0.60px,0.23px) rotate(0.03deg);">275</span>
<span class="r" style="right:111px;top:418px;font-size:8.75px;line-height:14px;font-weight:normal;font-style:normal;color:#000;transform-origin:100% 50%;transform:translate(-0.60px,0.23px) rotate(0.03deg);">14</span>
<span class="r" style="right:70px;top:418px;font-size:8.75px;line-height:14px;font-weight:normal;font-style:normal;color:#000;transform-origin:100% 50%;transform:translate(-0.30px,0.23px) rotate(0.03deg);">100.00</span>
<span class="r" style="left:30px;top:430px;font-size:8.75px;line-height:14px;font-weight:normal;font-style:normal;color:#000;transform-origin:0 50%;transform:translate(0.00px,0.90px) rotate(0.03deg);">Pre-translated</span>
<span class="r" style="right:511px;top:430px;font-size:8.75px;line-height:14px;font-weight:normal;font-style:normal;color:#000;transform-origin:100% 50%;transform:translate(-0.10px,0.90px) rotate(0.03deg);">0</span>
<span class="r" style="right:445px;top:430px;font-size:8.75px;line-height:14px;font-weight:normal;font-style:normal;color:#000;transform-origin:100% 50%;transform:translate(-0.90px,0.90px) rotate(0.03deg);">0</span>
<span class="r" style="right:339px;top:430px;font-size:8.75px;line-height:14px;font-weight:normal;font-style:normal;color:#000;transform-origin:100% 50%;transform:translate(-0.60px,0.90px) rotate(0.03deg);">0</span>
<span class="r" style="right:232px;top:430px;font-size:8.75px;line-height:14px;font-weight:normal;font-style:normal;color:#000;transform-origin:100% 50%;transform:translate(-0.20px,0.90px) rotate(0.03deg);">0</span>
<span class="r" style="right:169px;top:430px;font-size:8.75px;line-height:14px;font-weight:normal;font-style:normal;color:#000;transform-origin:100% 50%;transform:translate(-0.60px,0.90px) rotate(0.03deg);">0</span>
<span class="r" style="right:111px;top:430px;font-size:8.75px;line-height:14px;font-weight:normal;font-style:normal;color:#000;transform-origin:100% 50%;transform:translate(-0.60px,0.90px) rotate(0.03deg);">0</span>
<span class="r" style="right:70px;top:430px;font-size:8.75px;line-height:14px;font-weight:normal;font-style:normal;color:#000;transform-origin:100% 50%;transform:translate(-0.30px,0.90px) rotate(0.03deg);">0.00</span>
<span class="r" style="left:30px;top:443px;font-size:8.75px;line-height:14px;font-weight:normal;font-style:normal;color:#000;transform-origin:0 50%;transform:translate(0.00px,0.57px) rotate(0.03deg);">Fragments</span>
<span class="r" style="right:511px;top:443px;font-size:8.75px;line-height:14px;font-weight:normal;font-style:normal;color:#000;transform-origin:100% 50%;transform:translate(-0.10px,0.57px) rotate(0.03deg);">0</span>
<span class="r" style="right:445px;top:443px;font-size:8.75px;line-height:14px;font-weight:normal;font-style:normal;color:#000;transform-origin:100% 50%;transform:translate(-0.90px,0.57px) rotate(0.03deg);">0</span>
<span class="r" style="right:339px;top:443px;font-size:8.75px;line-height:14px;font-weight:normal;font-style:normal;color:#000;transform-origin:100% 50%;transform:translate(-0.60px,0.57px) rotate(0.03deg);">0</span>
<span class="r" style="right:232px;top:443px;font-size:8.75px;line-height:14px;font-weight:normal;font-style:normal;color:#000;transform-origin:100% 50%;transform:translate(-0.20px,0.57px) rotate(0.03deg);">0</span>
<span class="r" style="right:169px;top:443px;font-size:8.75px;line-height:14px;font-weight:normal;font-style:normal;color:#000;transform-origin:100% 50%;transform:translate(-0.60px,0.57px) rotate(0.03deg);">0</span>
<span class="r" style="right:111px;top:443px;font-size:8.75px;line-height:14px;font-weight:normal;font-style:normal;color:#000;transform-origin:100% 50%;transform:translate(-0.60px,0.57px) rotate(0.03deg);">0</span>
<span class="r" style="right:70px;top:443px;font-size:8.75px;line-height:14px;font-weight:normal;font-style:normal;color:#000;transform-origin:100% 50%;transform:translate(-0.30px,0.57px) rotate(0.03deg);">0.00</span>
<span class="r" style="left:30px;top:456px;font-size:8.75px;line-height:14px;font-weight:normal;font-style:normal;color:#000;transform-origin:0 50%;transform:translate(0.00px,0.24px) rotate(0.03deg);">Edited</span>
<span class="r" style="right:511px;top:456px;font-size:8.75px;line-height:14px;font-weight:normal;font-style:normal;color:#000;transform-origin:100% 50%;transform:translate(-0.10px,0.24px) rotate(0.03deg);">0</span>
<span class="r" style="right:445px;top:456px;font-size:8.75px;line-height:14px;font-weight:normal;font-style:normal;color:#000;transform-origin:100% 50%;transform:translate(-0.90px,0.24px) rotate(0.03deg);">0</span>
<span class="r" style="right:339px;top:456px;font-size:8.75px;line-height:14px;font-weight:normal;font-style:normal;color:#000;transform-origin:100% 50%;transform:translate(-0.60px,0.24px) rotate(0.03deg);">0</span>
<span class="r" style="right:232px;top:456px;font-size:8.75px;line-height:14px;font-weight:normal;font-style:normal;color:#000;transform-origin:100% 50%;transform:translate(-0.20px,0.24px) rotate(0.03deg);">0</span>
<span class="r" style="right:169px;top:456px;font-size:8.75px;line-height:14px;font-weight:normal;font-style:normal;color:#000;transform-origin:100% 50%;transform:translate(-0.60px,0.24px) rotate(0.03deg);">0</span>
<span class="r" style="right:111px;top:456px;font-size:8.75px;line-height:14px;font-weight:normal;font-style:normal;color:#000;transform-origin:100% 50%;transform:translate(-0.60px,0.24px) rotate(0.03deg);">0</span>
<span class="r" style="right:70px;top:456px;font-size:8.75px;line-height:14px;font-weight:normal;font-style:normal;color:#000;transform-origin:100% 50%;transform:translate(-0.30px,0.24px) rotate(0.03deg);">0.00</span>
<span class="r" style="left:30px;top:468px;font-size:8.75px;line-height:14px;font-weight:normal;font-style:normal;color:#000;transform-origin:0 50%;transform:translate(0.00px,0.91px) rotate(0.03deg);">Rejected</span>
<span class="r" style="right:511px;top:468px;font-size:8.75px;line-height:14px;font-weight:normal;font-style:normal;color:#000;transform-origin:100% 50%;transform:translate(-0.10px,0.91px) rotate(0.03deg);">0</span>
<span class="r" style="right:445px;top:468px;font-size:8.75px;line-height:14px;font-weight:normal;font-style:normal;color:#000;transform-origin:100% 50%;transform:translate(-0.90px,0.91px) rotate(0.03deg);">0</span>
<span class="r" style="right:339px;top:468px;font-size:8.75px;line-height:14px;font-weight:normal;font-style:normal;color:#000;transform-origin:100% 50%;transform:translate(-0.60px,0.91px) rotate(0.03deg);">0</span>
<span class="r" style="right:232px;top:468px;font-size:8.75px;line-height:14px;font-weight:normal;font-style:normal;color:#000;transform-origin:100% 50%;transform:translate(-0.20px,0.91px) rotate(0.03deg);">0</span>
<span class="r" style="right:169px;top:468px;font-size:8.75px;line-height:14px;font-weight:normal;font-style:normal;color:#000;transform-origin:100% 50%;transform:translate(-0.60px,0.91px) rotate(0.03deg);">0</span>
<span class="r" style="right:111px;top:468px;font-size:8.75px;line-height:14px;font-weight:normal;font-style:normal;color:#000;transform-origin:100% 50%;transform:translate(-0.60px,0.91px) rotate(0.03deg);">0</span>
<span class="r" style="right:70px;top:468px;font-size:8.75px;line-height:14px;font-weight:normal;font-style:normal;color:#000;transform-origin:100% 50%;transform:translate(-0.30px,0.91px) rotate(0.03deg);">0.00</span>
<span class="r" style="left:30px;top:481px;font-size:8.75px;line-height:14px;font-weight:normal;font-style:normal;color:#000;transform-origin:0 50%;transform:translate(0.00px,0.58px) rotate(0.03deg);">Translator confirmed</span>
<span class="r" style="right:511px;top:481px;font-size:8.75px;line-height:14px;font-weight:normal;font-style:normal;color:#000;transform-origin:100% 50%;transform:translate(-0.10px,0.58px) rotate(0.03deg);">0</span>
<span class="r" style="right:445px;top:481px;font-size:8.75px;line-height:14px;font-weight:normal;font-style:normal;color:#000;transform-origin:100% 50%;transform:translate(-0.90px,0.58px) rotate(0.03deg);">0</span>
<span class="r" style="right:339px;top:481px;font-size:8.75px;line-height:14px;font-weight:normal;font-style:normal;color:#000;transform-origin:100% 50%;transform:translate(-0.60px,0.58px) rotate(0.03deg);">0</span>
<span class="r" style="right:232px;top:481px;font-size:8.75px;line-height:14px;font-weight:normal;font-style:normal;color:#000;transform-origin:100% 50%;transform:translate(-0.20px,0.58px) rotate(0.03deg);">0</span>
<span class="r" style="right:169px;top:481px;font-size:8.75px;line-height:14px;font-weight:normal;font-style:normal;color:#000;transform-origin:100% 50%;transform:translate(-0.60px,0.58px) rotate(0.03deg);">0</span>
<span class="r" style="right:111px;top:481px;font-size:8.75px;line-height:14px;font-weight:normal;font-style:normal;color:#000;transform-origin:100% 50%;transform:translate(-0.60px,0.58px) rotate(0.03deg);">0</span>
<span class="r" style="right:70px;top:481px;font-size:8.75px;line-height:14px;font-weight:normal;font-style:normal;color:#000;transform-origin:100% 50%;transform:translate(-0.30px,0.58px) rotate(0.03deg);">0.00</span>
<span class="r" style="left:30px;top:494px;font-size:8.75px;line-height:14px;font-weight:normal;font-style:normal;color:#000;transform-origin:0 50%;transform:translate(0.00px,0.25px) rotate(0.03deg);">Reviewer 1 confirmed</span>
<span class="r" style="right:511px;top:494px;font-size:8.75px;line-height:14px;font-weight:normal;font-style:normal;color:#000;transform-origin:100% 50%;transform:translate(-0.10px,0.25px) rotate(0.03deg);">0</span>
<span class="r" style="right:445px;top:494px;font-size:8.75px;line-height:14px;font-weight:normal;font-style:normal;color:#000;transform-origin:100% 50%;transform:translate(-0.90px,0.25px) rotate(0.03deg);">0</span>
<span class="r" style="right:339px;top:494px;font-size:8.75px;line-height:14px;font-weight:normal;font-style:normal;color:#000;transform-origin:100% 50%;transform:translate(-0.60px,0.25px) rotate(0.03deg);">0</span>
<span class="r" style="right:232px;top:494px;font-size:8.75px;line-height:14px;font-weight:normal;font-style:normal;color:#000;transform-origin:100% 50%;transform:translate(-0.20px,0.25px) rotate(0.03deg);">0</span>
<span class="r" style="right:169px;top:494px;font-size:8.75px;line-height:14px;font-weight:normal;font-style:normal;color:#000;transform-origin:100% 50%;transform:translate(-0.60px,0.25px) rotate(0.03deg);">0</span>
<span class="r" style="right:111px;top:494px;font-size:8.75px;line-height:14px;font-weight:normal;font-style:normal;color:#000;transform-origin:100% 50%;transform:translate(-0.60px,0.25px) rotate(0.03deg);">0</span>
<span class="r" style="right:70px;top:494px;font-size:8.75px;line-height:14px;font-weight:normal;font-style:normal;color:#000;transform-origin:100% 50%;transform:translate(-0.30px,0.25px) rotate(0.03deg);">0.00</span>
<span class="r" style="left:30px;top:506px;font-size:8.75px;line-height:14px;font-weight:normal;font-style:normal;color:#000;transform-origin:0 50%;transform:translate(0.00px,0.92px) rotate(0.03deg);">Reviewer 2 confirmed</span>
<span class="r" style="right:511px;top:506px;font-size:8.75px;line-height:14px;font-weight:normal;font-style:normal;color:#000;transform-origin:100% 50%;transform:translate(-0.10px,0.92px) rotate(0.03deg);">0</span>
<span class="r" style="right:445px;top:506px;font-size:8.75px;line-height:14px;font-weight:normal;font-style:normal;color:#000;transform-origin:100% 50%;transform:translate(-0.90px,0.92px) rotate(0.03deg);">0</span>
<span class="r" style="right:339px;top:506px;font-size:8.75px;line-height:14px;font-weight:normal;font-style:normal;color:#000;transform-origin:100% 50%;transform:translate(-0.60px,0.92px) rotate(0.03deg);">0</span>
<span class="r" style="right:232px;top:506px;font-size:8.75px;line-height:14px;font-weight:normal;font-style:normal;color:#000;transform-origin:100% 50%;transform:translate(-0.20px,0.92px) rotate(0.03deg);">0</span>
<span class="r" style="right:169px;top:506px;font-size:8.75px;line-height:14px;font-weight:normal;font-style:normal;color:#000;transform-origin:100% 50%;transform:translate(-0.60px,0.92px) rotate(0.03deg);">0</span>
<span class="r" style="right:111px;top:506px;font-size:8.75px;line-height:14px;font-weight:normal;font-style:normal;color:#000;transform-origin:100% 50%;transform:translate(-0.60px,0.92px) rotate(0.03deg);">0</span>
<span class="r" style="right:70px;top:506px;font-size:8.75px;line-height:14px;font-weight:normal;font-style:normal;color:#000;transform-origin:100% 50%;transform:translate(-0.30px,0.92px) rotate(0.03deg);">0.00</span>
<span class="r" style="left:30px;top:519px;font-size:8.75px;line-height:14px;font-weight:normal;font-style:normal;color:#000;transform-origin:0 50%;transform:translate(0.00px,0.59px) rotate(0.03deg);">Locked</span>
<span class="r" style="right:511px;top:519px;font-size:8.75px;line-height:14px;font-weight:normal;font-style:normal;color:#000;transform-origin:100% 50%;transform:translate(-0.10px,0.59px) rotate(0.03deg);">0</span>
<span class="r" style="right:445px;top:519px;font-size:8.75px;line-height:14px;font-weight:normal;font-style:normal;color:#000;transform-origin:100% 50%;transform:translate(-0.90px,0.59px) rotate(0.03deg);">0</span>
<span class="r" style="right:339px;top:519px;font-size:8.75px;line-height:14px;font-weight:normal;font-style:normal;color:#000;transform-origin:100% 50%;transform:translate(-0.60px,0.59px) rotate(0.03deg);">0</span>
<span class="r" style="right:232px;top:519px;font-size:8.75px;line-height:14px;font-weight:normal;font-style:normal;color:#000;transform-origin:100% 50%;transform:translate(-0.20px,0.59px) rotate(0.03deg);">0</span>
<span class="r" style="right:169px;top:519px;font-size:8.75px;line-height:14px;font-weight:normal;font-style:normal;color:#000;transform-origin:100% 50%;transform:translate(-0.60px,0.59px) rotate(0.03deg);">0</span>
<span class="r" style="right:111px;top:519px;font-size:8.75px;line-height:14px;font-weight:normal;font-style:normal;color:#000;transform-origin:100% 50%;transform:translate(-0.60px,0.59px) rotate(0.03deg);">0</span>
<span class="r" style="right:70px;top:519px;font-size:8.75px;line-height:14px;font-weight:normal;font-style:normal;color:#000;transform-origin:100% 50%;transform:translate(-0.30px,0.59px) rotate(0.03deg);">0.00</span>
</body></html>
